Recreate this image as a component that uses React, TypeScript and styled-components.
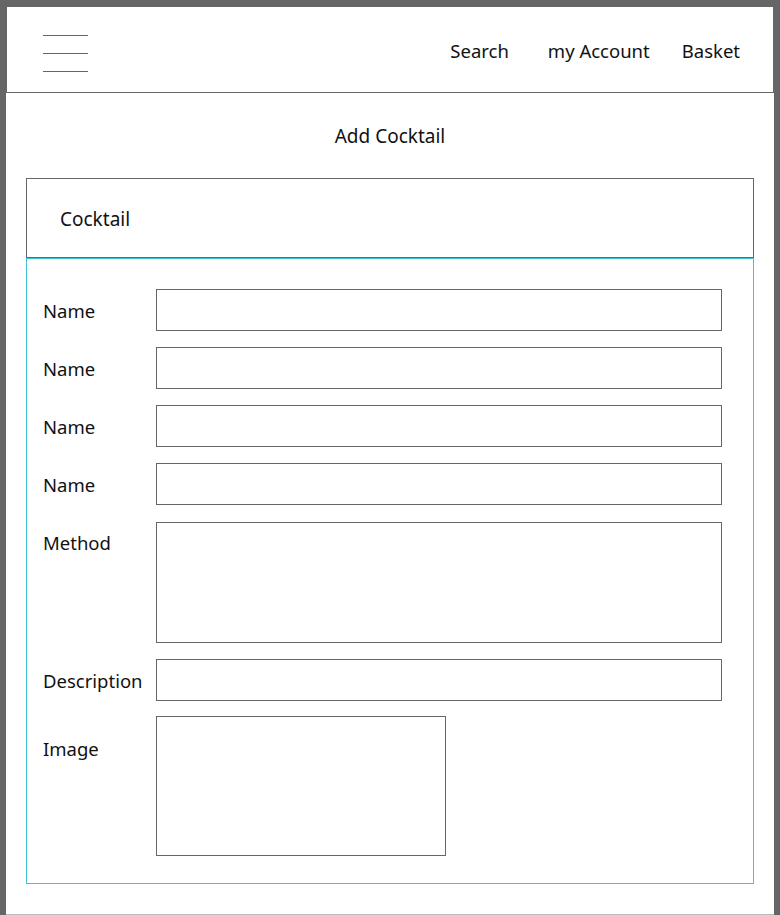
import React from "react";
import styled, { createGlobalStyle } from "styled-components";

const Global = createGlobalStyle`
  html, body { margin: 0; padding: 0; background: #666666; }
  body { font-family: "Noto Sans", "Open Sans", sans-serif; color: #111; }
  * { box-sizing: border-box; }
`;

const Frame = styled.div`
  padding: 6px 6px 0 6px;
`;

const Page = styled.div`
  background: #ffffff;
  min-height: 909px;
  border-bottom: 1px solid #bbbbbb;
  display: flex;
  flex-direction: column;
`;

const Header = styled.header`
  height: 87px;
  border: 1px solid #666666;
  display: flex;
  align-items: center;
  justify-content: space-between;
  padding: 0 33px 0 36px;
`;

const Burger = styled.button`
  width: 45px;
  height: 37px;
  padding: 0;
  border: none;
  background: none;
  display: flex;
  flex-direction: column;
  justify-content: space-between;
  margin-top: 8px;
`;

const BurgerLine = styled.span`
  display: block;
  height: 1px;
  width: 100%;
  background: #666666;
`;

const Nav = styled.nav`
  display: flex;
  align-items: center;
  margin-top: 2px;
`;

const NavLink = styled.a<{ $gap: number }>`
  font-size: 18.5px;
  color: #111;
  text-decoration: none;
  margin-left: ${(p) => p.$gap}px;
`;

const Title = styled.h1`
  margin: 0;
  height: 85px;
  display: flex;
  align-items: center;
  justify-content: center;
  font-size: 19px;
  font-weight: 400;
`;

const Card = styled.section`
  margin: 0 20px;
`;

const CardHeader = styled.div`
  height: 80px;
  border: 1px solid #666666;
  display: flex;
  align-items: center;
  padding: 1px 0 0 33px;
  font-size: 19px;
`;

const CardBody = styled.div`
  border: 1px solid #41c4d3;
  padding: 30px 31px 27px 16px;
  display: grid;
  grid-template-columns: 113px 1fr;
  row-gap: 16px;
`;

const Label = styled.label<{ $offset: number }>`
  font-size: 18.5px;
  line-height: 24px;
  padding-top: ${(p) => p.$offset}px;
`;

const Field = styled.div<{ $h: number; $w?: number; $top?: number }>`
  height: ${(p) => p.$h}px;
  width: ${(p) => (p.$w ? `${p.$w}px` : "100%")};
  margin-top: ${(p) => p.$top ?? 0}px;
  border: 1px solid #666666;
  background: #fff;
`;

const fields: { label: string; h: number; w?: number; offset: number; top?: number }[] = [
  { label: "Name", h: 42, offset: 10 },
  { label: "Name", h: 42, offset: 10 },
  { label: "Name", h: 42, offset: 10 },
  { label: "Name", h: 42, offset: 10 },
  { label: "Method", h: 121, offset: 10, top: 1 },
  { label: "Description", h: 42, offset: 10 },
  { label: "Image", h: 140, w: 290, offset: 20, top: -1 },
];

export default function App() {
  return (
    <>
      <Global />
      <Frame>
        <Page>
          <Header>
            <Burger aria-label="menu">
              <BurgerLine />
              <BurgerLine />
              <BurgerLine />
            </Burger>
            <Nav>
              <NavLink $gap={0}>Search</NavLink>
              <NavLink $gap={39}>my Account</NavLink>
              <NavLink $gap={32}>Basket</NavLink>
            </Nav>
          </Header>
          <Title>Add Cocktail</Title>
          <Card>
            <CardHeader>Cocktail</CardHeader>
            <CardBody>
              {fields.map((f, i) => (
                <React.Fragment key={i}>
                  <Label $offset={f.offset}>{f.label}</Label>
                  <Field $h={f.h} $w={f.w} $top={f.top} />
                </React.Fragment>
              ))}
            </CardBody>
          </Card>
        </Page>
      </Frame>
    </>
  );
}
